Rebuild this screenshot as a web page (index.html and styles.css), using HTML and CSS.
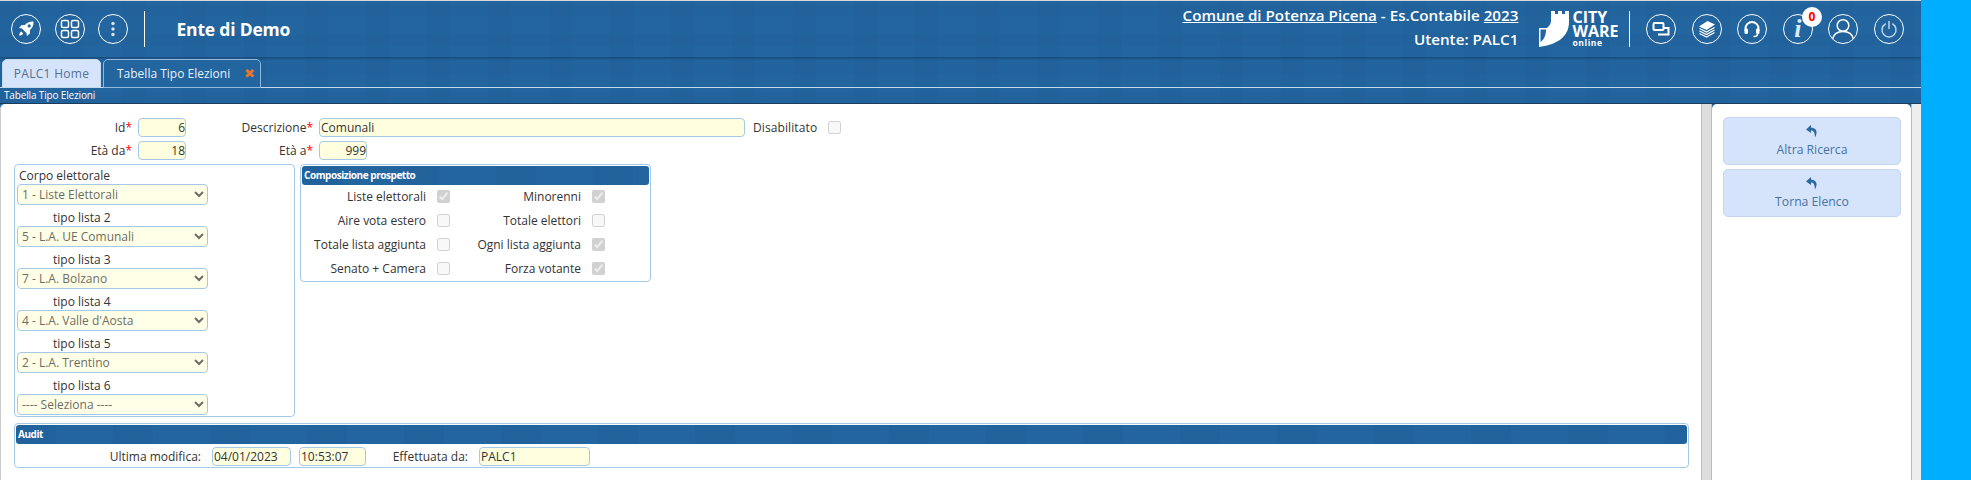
FILE: index.html
```html
<!DOCTYPE html>
<html>
<head>
    <title>Tabella Tipo Elezioni</title>
    <meta charset="UTF-8">
    <link rel="stylesheet" href="styles.css">
</head>
<body>
    <div class="app">
        <header class="topbar">
            <div class="round-icon first">
                <svg width="18" height="18" viewBox="0 0 18 18"><path fill="#fff" d="M16.500 1.500c-3.600-.3-6.400.9-8.600 3.600H4.600L2 8l3 .6L9.400 13l.6 3 2.900-2.600V10.100c2.700-2.200 3.900-5 3.600-8.600zM12.200 7.500a1.600 1.600 0 1 1 0-3.200 1.600 1.600 0 0 1 0 3.200zM4.400 11.600c-1.200.5-2 1.700-2.200 4 2.300-.2 3.500-1 4-2.200z"/></svg>
            </div>
            <div class="round-icon">
                <svg width="20" height="20" viewBox="0 0 20 20" fill="none" stroke="#fff" stroke-width="1.500"><rect x="1.500" y="1.500" width="7" height="7" rx="1.500"/><rect x="11.500" y="1.500" width="7" height="7" rx="1.500"/><rect x="1.500" y="11.500" width="7" height="7" rx="1.500"/><rect x="11.500" y="11.500" width="7" height="7" rx="1.500"/></svg>
            </div>
            <div class="round-icon">
                <svg width="6" height="16" viewBox="0 0 6 16" fill="#d9e6f2"><circle cx="3" cy="2.500" r="1.700"/><circle cx="3" cy="8" r="1.700"/><circle cx="3" cy="13.500" r="1.700"/></svg>
            </div>
            <div class="divider"></div>
            <div class="app-title">Ente di Demo</div>

            <div class="user-info">
                <div><u>Comune di Potenza Picena</u> - Es.Contabile <u>2023</u></div>
                <div>Utente: PALC1</div>
            </div>
            <div class="logo">
                <svg width="31" height="36" viewBox="0 0 31 36"><path fill="#fff" d="M13 0h4v3h3V0h4v3h3V0h4v11C31 22 24 33 1 36V17h8c2-2 4-4 4-7z"/><path fill="#22659f" d="M2.500 18.500H8c0 5.500-2 10.500-5.500 12.500z"/></svg>
                <div class="logo-text">
                    <div class="logo-line">CITY</div>
                    <div class="logo-line">WARE</div>
                    <div class="logo-sub">online</div>
                </div>
            </div>
            <div class="divider right"></div>
            <div class="round-icon">
                <svg width="18" height="18" viewBox="0 0 18 18" fill="none" stroke="#fff" stroke-width="2"><rect x="1.500" y="3" width="10" height="7" rx="1"/><path d="M7 13.500v1h9.500V8H12"/></svg>
            </div>
            <div class="round-icon">
                <svg width="20" height="20" viewBox="0 0 20 20"><path fill="#fff" d="M2 7.500L10.500 2 18 5.500 9.500 11z"/><path fill="none" stroke="#fff" stroke-width="1.300" d="M2.500 9.500l7 3.500 8-4.500M2.500 12l7 3.500 8-4.500M2.500 14.500l7 3.500 8-4.500"/></svg>
            </div>
            <div class="round-icon">
                <svg width="20" height="20" viewBox="0 0 20 20" fill="none" stroke="#fff" stroke-width="2"><path d="M3.500 12V9.500a6.500 6.500 0 0 1 13 0V12"/><rect x="2.500" y="9.500" width="3.500" height="5.500" rx="1.200" fill="#fff" stroke="none"/><rect x="14" y="9.500" width="3.500" height="5.500" rx="1.200" fill="#fff" stroke="none"/><path stroke-width="1.500" d="M15.500 15c0 1.800-1.500 2.500-4 2.500"/></svg>
            </div>
            <div class="round-icon info-icon">
                <span class="info-i">i</span>
                <span class="badge">0</span>
            </div>
            <div class="round-icon">
                <svg width="28" height="28" viewBox="0 0 28 28" fill="none" stroke="#fff" stroke-width="1.500"><circle cx="14" cy="10.500" r="5.800"/><path d="M3.500 24c1.200-5 5-7.500 10.500-7.500S23.300 19 24.500 24"/></svg>
            </div>
            <div class="round-icon">
                <svg width="20" height="20" viewBox="0 0 20 20" fill="none" stroke="#b9d4ea" stroke-width="1.500" stroke-linecap="round"><path d="M6.300 5a7 7 0 1 0 7.400 0"/><path d="M10 2.500v7"/></svg>
            </div>
        </header>

        <div class="tabs">
            <div class="tab home">PALC1 Home</div>
            <div class="tab active">Tabella Tipo Elezioni<span class="tab-close">✖</span></div>
        </div>
        <div class="page-title">Tabella Tipo Elezioni</div>

        <div class="workspace">
            <div class="content">
                <div class="form-row">
                    <label class="lbl lbl-first">Id<i>*</i></label>
                    <input class="inp inp-num" value="6">
                    <label class="lbl lbl-second">Descrizione<i>*</i></label>
                    <input class="inp inp-desc" value="Comunali">
                    <label class="lbl-disab">Disabilitato</label>
                    <input type="checkbox" class="chk" disabled>
                </div>
                <div class="form-row">
                    <label class="lbl lbl-first">Età da<i>*</i></label>
                    <input class="inp inp-num" value="18">
                    <label class="lbl lbl-second">Età a<i>*</i></label>
                    <input class="inp inp-num" value="999">
                </div>

                <div class="columns">
                    <div class="box corpo">
                        <div class="corpo-title">Corpo elettorale</div>
                        <select class="sel" disabled><option>1 - Liste Elettorali</option></select>
                        <div class="corpo-label">tipo lista 2</div>
                        <select class="sel" disabled><option>5 - L.A. UE Comunali</option></select>
                        <div class="corpo-label">tipo lista 3</div>
                        <select class="sel" disabled><option>7 - L.A. Bolzano</option></select>
                        <div class="corpo-label">tipo lista 4</div>
                        <select class="sel" disabled><option>4 - L.A. Valle d'Aosta</option></select>
                        <div class="corpo-label">tipo lista 5</div>
                        <select class="sel" disabled><option>2 - L.A. Trentino</option></select>
                        <div class="corpo-label">tipo lista 6</div>
                        <select class="sel" disabled><option>---- Seleziona ----</option></select>
                    </div>

                    <div class="box prospetto">
                        <div class="legend">Composizione prospetto</div>
                        <div class="check-grid">
                            <label>Liste elettorali</label><input type="checkbox" class="chk" checked disabled>
                            <label>Minorenni</label><input type="checkbox" class="chk" checked disabled>
                            <label>Aire vota estero</label><input type="checkbox" class="chk" disabled>
                            <label>Totale elettori</label><input type="checkbox" class="chk" disabled>
                            <label>Totale lista aggiunta</label><input type="checkbox" class="chk" disabled>
                            <label>Ogni lista aggiunta</label><input type="checkbox" class="chk" checked disabled>
                            <label>Senato + Camera</label><input type="checkbox" class="chk" disabled>
                            <label>Forza votante</label><input type="checkbox" class="chk" checked disabled>
                        </div>
                    </div>
                </div>

                <div class="box audit">
                    <div class="legend">Audit</div>
                    <div class="audit-row">
                        <label class="lbl-modifica">Ultima modifica:</label>
                        <input class="inp inp-date" value="04/01/2023">
                        <input class="inp inp-time" value="10:53:07">
                        <label class="lbl-effettuata">Effettuata da:</label>
                        <input class="inp inp-user" value="PALC1">
                    </div>
                </div>
            </div>

            <div class="splitter"></div>

            <div class="actions">
                <button class="action-btn">
                    <svg width="14" height="13" viewBox="0 0 14 13"><path fill="#2a6aa0" d="M6 0L1 4.500 6 8V5.500c2.500 0 3.700 1.500 4 7 2.500-4.500 2.500-9.500-4-10z"/></svg>
                    <span>Altra Ricerca</span>
                </button>
                <button class="action-btn">
                    <svg width="14" height="13" viewBox="0 0 14 13"><path fill="#2a6aa0" d="M6 0L1 4.500 6 8V5.500c2.500 0 3.700 1.500 4 7 2.500-4.500 2.500-9.500-4-10z"/></svg>
                    <span>Torna Elenco</span>
                </button>
            </div>
            <div class="edge"></div>
        </div>
    </div>
    <div class="side"></div>
</body>
</html>
```

FILE: styles.css
```css
* {
    box-sizing: border-box;
}

html, body {
    margin: 0;
    height: 480px;
    overflow: hidden;
}

body {
    display: flex;
    font-family: "Open Sans", "Liberation Sans", sans-serif;
    font-size: 12px;
    color: #333;
    background: #fff;
}

.app {
    width: 1921px;
    display: flex;
    flex-direction: column;
    background-color: #22659f;
    background-image:
        repeating-linear-gradient(90deg, rgba(30,50,100,0.04) 0 23px, transparent 23px 61px),
        repeating-linear-gradient(0deg, rgba(30,50,100,0.035) 0 11px, transparent 11px 29px);
}

.side {
    width: 50px;
    background: #00aeff;
}

/* barra in alto */
.topbar {
    height: 57px;
    padding: 0 17px 1px 11px;
    flex-shrink: 0;
    display: flex;
    align-items: center;
    box-shadow: 0 1px 3px rgba(10,30,60,0.5);
    border-top: 1px solid #d8d8d8;
}

.round-icon {
    position: relative;
    width: 30px;
    height: 30px;
    margin-left: 15.600px;
    flex-shrink: 0;
    border: 1.500px solid #fff;
    border-radius: 50%;
    display: flex;
    align-items: center;
    justify-content: center;
}

.topbar > .round-icon:nth-child(-n+3) {
    margin-left: 13.500px;
}

.topbar > .round-icon.first {
    margin-left: 0;
}

.divider {
    width: 1px;
    height: 36px;
    margin-left: 15.500px;
    background: #fff;
}

.divider.right {
    margin-left: 15px;
}

.app-title {
    margin-left: 32px;
    font-size: 17.500px;
    font-weight: 700;
    letter-spacing: -0.2px;
    color: #fff;
}

.user-info {
    margin-left: auto;
    padding-bottom: 3px;
    text-align: right;
    font-size: 15.200px;
    font-weight: 600;
    line-height: 24px;
    color: #fff;
}

.logo {
    margin-left: 20px;
    display: flex;
    align-items: center;
    gap: 3px;
    color: #fff;
}

.logo-text {
    font-weight: 700;
    width: 42px;
}

.logo-line {
    font-size: 16px;
    line-height: 14px;
}

.logo-sub {
    font-size: 8.500px;
    line-height: 10px;
    letter-spacing: 0.6px;
}

.info-i {
    font-family: "Liberation Serif", serif;
    font-style: italic;
    font-weight: 700;
    font-size: 26px;
    line-height: 26px;
    color: #dcebf7;
}

.badge {
    position: absolute;
    top: -8px;
    right: -10px;
    width: 20px;
    height: 20px;
    border-radius: 50%;
    background: #fff;
    color: #f00;
    font-size: 12px;
    font-weight: 700;
    line-height: 20px;
    text-align: center;
}

/* tab */
.tabs {
    height: 31px;
    padding: 2px 0 0 2px;
    display: flex;
    gap: 2px;
    flex-shrink: 0;
    border-bottom: 1px solid #c5d9ea;
}

.tab {
    height: 29px;
    margin-bottom: -1px;
    font-size: 12px;
    line-height: 27px;
    border: 1px solid #8fb8dc;
    border-radius: 5px 5px 0 0;
}

.tab.home {
    width: 99px;
    text-align: center;
    letter-spacing: 0.3px;
    background: #d6e4fb;
    color: #52708f;
    border-color: #c5d9ea;
}

.tab.active {
    width: 158px;
    padding-left: 13px;
    color: #eaf2f9;
    background: #22659f;
}

.tab-close {
    margin-left: 14px;
    font-size: 13px;
    color: #e5762c;
}

.page-title {
    height: 16px;
    padding-left: 4px;
    flex-shrink: 0;
    font-size: 10px;
    line-height: 15px;
    letter-spacing: -0.15px;
    color: #fff;
    border-bottom: 1px solid #1c3c5c;
}

/* area di lavoro */
.workspace {
    flex: 1;
    display: flex;
    min-height: 0;
}

.content {
    width: 1701px;
    padding: 14px 0 0 13px;
    background: #fff;
    border-radius: 5px 0 0 0;
    border-left: 1px solid #ccc;
}

.form-row {
    height: 19px;
    margin-bottom: 4px;
    display: flex;
    align-items: center;
}

.lbl {
    text-align: right;
}

.lbl i {
    color: #f00;
    font-style: normal;
}

.lbl-first {
    width: 118px;
    margin-right: 6px;
}

.lbl-second {
    width: 127px;
    margin-right: 6px;
}

.lbl-disab {
    margin: 0 11px 0 8px;
    letter-spacing: 0.1px;
}

.inp {
    height: 19px;
    padding: 0 1px;
    font-family: inherit;
    font-size: 12px;
    color: #333;
    background: #ffffe0;
    border: 1px solid #a4c9e6;
    border-radius: 4px;
}

.inp-num {
    width: 48px;
    padding-right: 0;
    text-align: right;
}

.inp-desc {
    width: 426px;
}

.chk {
    width: 13px;
    height: 13px;
    margin: 0;
}

.columns {
    display: flex;
    gap: 5px;
}

.box {
    border: 1px solid #a4c9e6;
    border-radius: 4px;
    background: #fff;
}

.legend {
    height: 19px;
    padding-left: 2px;
    font-size: 10px;
    font-weight: 700;
    line-height: 18px;
    letter-spacing: -0.45px;
    color: #fff;
    background-color: #22659f;
    background-image: repeating-linear-gradient(90deg, rgba(30,50,100,0.05) 0 40px, transparent 40px 97px);
    border-radius: 3px;
}

.corpo {
    width: 281px;
    height: 253px;
    padding: 3px 0 0 2px;
}

.corpo-title {
    height: 16px;
    padding-left: 2px;
    line-height: 16px;
}

.corpo-label {
    height: 21.500px;
    padding-left: 36px;
    line-height: 25px;
}

.sel {
    display: block;
    width: 191px;
    height: 20.500px;
    font-family: inherit;
    font-size: 12px;
    background: #ffffe8;
    border: 1px solid #a4c9e6;
    border-radius: 4px;
    color: #6d6d64;
    opacity: 1;
}

.prospetto {
    width: 351px;
    height: 118px;
    padding: 1px;
}

.check-grid {
    display: grid;
    grid-template-columns: 124px 13px 120px 13px;
    column-gap: 11px;
    row-gap: 11px;
    padding-top: 5px;
    align-items: center;
}

.check-grid label {
    height: 13px;
    line-height: 13px;
    text-align: right;
    white-space: nowrap;
}

.audit {
    width: 1675px;
    height: 45px;
    margin-top: 6px;
    padding: 1px;
}

.audit-row {
    margin-top: 3px;
    display: flex;
    align-items: center;
}

.lbl-modifica {
    width: 185px;
    text-align: right;
    margin-right: 11px;
}

.inp-date {
    width: 79px;
}

.inp-time {
    width: 67px;
    margin-left: 8px;
}

.lbl-effettuata {
    width: 102px;
    text-align: right;
    margin-right: 11px;
}

.inp-user {
    width: 111px;
}

.splitter {
    width: 11px;
    background: #ddd;
    border-left: 1px solid #bbb;
    border-right: 1px solid #bbb;
}

.actions {
    width: 199px;
    padding: 13px 10px 0 11px;
    background: #fff;
    border-radius: 5px 5px 0 0;
    display: flex;
    flex-direction: column;
    gap: 4px;
}

.action-btn {
    height: 48px;
    padding: 0;
    font-family: inherit;
    font-size: 12.200px;
    color: #4673a5;
    background: #d6e4fb;
    border: 1px solid #c3d6ee;
    border-radius: 5px;
    display: flex;
    flex-direction: column;
    align-items: center;
    justify-content: center;
    gap: 3px;
}

.edge {
    width: 10px;
    background: #eee;
    border-left: 1px solid #bbb;
}
```
